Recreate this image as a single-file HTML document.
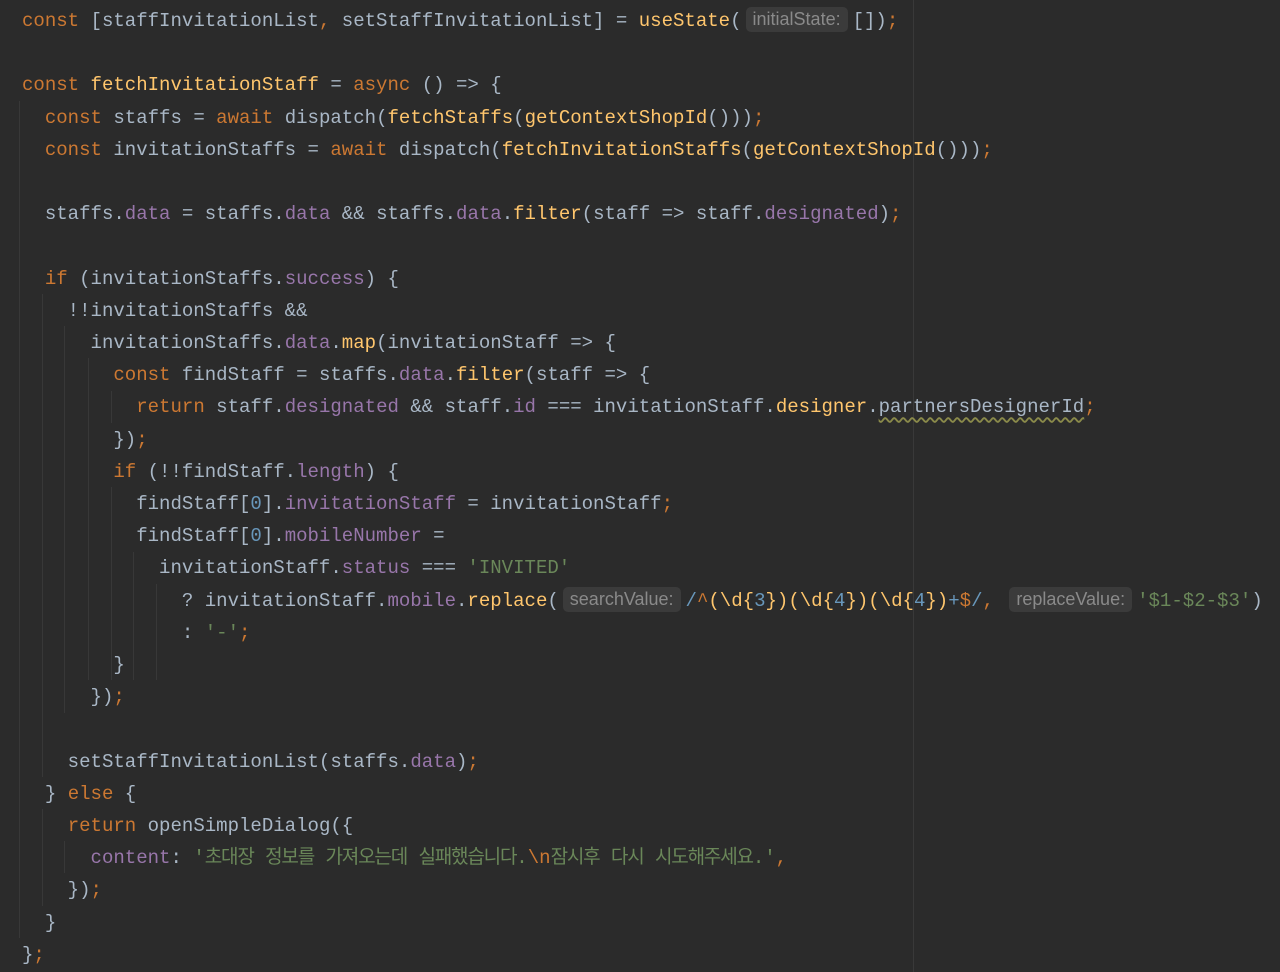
<!DOCTYPE html>
<html><head><meta charset="utf-8"><style>
html,body{margin:0;padding:0;background:#2b2b2b;width:1280px;height:972px;overflow:hidden}
#c{position:absolute;left:22px;top:5px;font-family:"Liberation Mono","Noto Sans CJK KR",monospace;font-size:19.05px;line-height:32.2px;color:#a9b7c6;white-space:pre}
.k{color:#cc7832}.f{color:#ffc66d}.p{color:#9876aa}.s{color:#6a8759}.n{color:#6897bb}
.h{display:inline-block;background:#3b3b3b;color:#8a8a8a;font-family:"Liberation Sans",sans-serif;font-size:18px;line-height:25px;padding:0 7px;border-radius:5px;margin:0 5px 0 4px;vertical-align:1px}
.w{text-decoration:underline wavy #8a8a4a;text-underline-offset:4px}
.ko{letter-spacing:-1.2px}
.g{position:absolute;width:1px;background:#383838}
#m{position:absolute;left:913px;top:0;width:1px;height:972px;background:#393939}
</style></head><body>
<div id="m"></div>
<div class="g" style="left:19px;top:101px;height:837px"></div>
<div class="g" style="left:42px;top:294px;height:483px"></div>
<div class="g" style="left:42px;top:809px;height:97px"></div>
<div class="g" style="left:64px;top:326px;height:387px"></div>
<div class="g" style="left:64px;top:841px;height:32px"></div>
<div class="g" style="left:88px;top:358px;height:322px"></div>
<div class="g" style="left:111px;top:391px;height:32px"></div>
<div class="g" style="left:111px;top:487px;height:193px"></div>
<div class="g" style="left:133px;top:552px;height:128px"></div>
<div class="g" style="left:156px;top:584px;height:96px"></div>
<div id="c"><span class="k">const</span> [staffInvitationList<span class="k">,</span> setStaffInvitationList] = <span class="f">useState</span>(<span class="h">initialState:</span>[])<span class="k">;</span>

<span class="k">const</span> <span class="f">fetchInvitationStaff</span> = <span class="k">async</span> () => {
  <span class="k">const</span> staffs = <span class="k">await</span> dispatch(<span class="f">fetchStaffs</span>(<span class="f">getContextShopId</span>()))<span class="k">;</span>
  <span class="k">const</span> invitationStaffs = <span class="k">await</span> dispatch(<span class="f">fetchInvitationStaffs</span>(<span class="f">getContextShopId</span>()))<span class="k">;</span>

  staffs.<span class="p">data</span> = staffs.<span class="p">data</span> &amp;&amp; staffs.<span class="p">data</span>.<span class="f">filter</span>(staff =&gt; staff.<span class="p">designated</span>)<span class="k">;</span>

  <span class="k">if</span> (invitationStaffs.<span class="p">success</span>) {
    !!invitationStaffs &amp;&amp;
      invitationStaffs.<span class="p">data</span>.<span class="f">map</span>(invitationStaff =&gt; {
        <span class="k">const</span> findStaff = staffs.<span class="p">data</span>.<span class="f">filter</span>(staff =&gt; {
          <span class="k">return</span> staff.<span class="p">designated</span> &amp;&amp; staff.<span class="p">id</span> === invitationStaff.<span class="f">designer</span>.<span class="w">partnersDesignerId</span><span class="k">;</span>
        })<span class="k">;</span>
        <span class="k">if</span> (!!findStaff.<span class="p">length</span>) {
          findStaff[<span class="n">0</span>].<span class="p">invitationStaff</span> = invitationStaff<span class="k">;</span>
          findStaff[<span class="n">0</span>].<span class="p">mobileNumber</span> =
            invitationStaff.<span class="p">status</span> === <span class="s">'INVITED'</span>
              ? invitationStaff.<span class="p">mobile</span>.<span class="f">replace</span>(<span class="h">searchValue:</span><span class="n">/</span><span class="k">^</span><span class="f">(\d{</span><span class="n">3</span><span class="f">})(\d{</span><span class="n">4</span><span class="f">})(\d{</span><span class="n">4</span><span class="f">})</span><span class="n">+</span><span class="k">$</span><span class="n">/</span><span class="k">,</span> <span class="h">replaceValue:</span><span class="s">'$1-$2-$3'</span>)
              : <span class="s">'-'</span><span class="k">;</span>
        }
      })<span class="k">;</span>

    setStaffInvitationList(staffs.<span class="p">data</span>)<span class="k">;</span>
  } <span class="k">else</span> {
    <span class="k">return</span> openSimpleDialog({
      <span class="p">content</span>: <span class="s">'<span class="ko">초대장</span> <span class="ko">정보를</span> <span class="ko">가져오는데</span> <span class="ko">실패했습니다</span>.<span class="k">\n</span><span class="ko">잠시후</span> <span class="ko">다시</span> <span class="ko">시도해주세요</span>.'</span><span class="k">,</span>
    })<span class="k">;</span>
  }
}<span class="k">;</span></div>
</body></html>
